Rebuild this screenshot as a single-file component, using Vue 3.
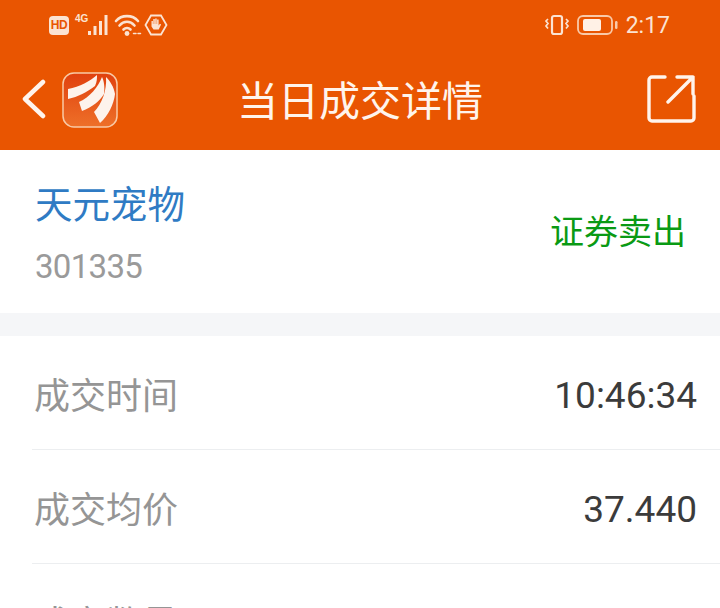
<template>
  <div class="page">
    <header class="top">
      <div class="status-bar">
        <div class="status-left">
          <span class="hd">HD</span>
          <span class="net">4G</span>
          <svg class="signal" width="24" height="22" viewBox="0 0 24 22">
            <rect x="2" y="17" width="3" height="4" />
            <rect x="7.500" y="12" width="3" height="9" />
            <rect x="13" y="7" width="3" height="14" />
            <rect x="18.500" y="1" width="3" height="20" />
          </svg>
          <svg class="wifi" width="28" height="24" viewBox="0 0 28 24" fill="none" stroke="#fbe3d2" stroke-width="2.600" stroke-linecap="round">
            <path d="M2 8C7.500 1.500 18.500 1.500 24 8" />
            <path d="M5.500 12.500C10 7.500 16 7.500 20.500 12.500" />
            <path d="M9.500 16.500C11.500 14.500 14.500 14.500 16.500 16.500" />
            <circle cx="13" cy="20.500" r="2.400" fill="#fbe3d2" stroke="none" />
            <path d="M19.500 20.500h2.500M24 20.500h2.500" stroke-width="1.500" />
          </svg>
          <svg class="hand" width="24" height="24" viewBox="0 0 24 24">
            <path d="M7 2.500h10l5.500 9.500-5.500 9.500H7L1.500 12z" fill="none" stroke="#fbe3d2" stroke-width="1.800" />
            <path d="M7.500 11V8h1.400v3h.4V6h1.500v5h.4V5.500h1.500V11h.4V6.500h1.500v6l1.300-1.800 1.200.7-2.400 5.100H9.500l-2-3z" fill="#fbe3d2" />
          </svg>
        </div>
        <div class="status-right">
          <svg class="vibrate" width="26" height="22" viewBox="0 0 26 22" fill="none" stroke="#fbe3d2">
            <rect x="8" y="2" width="10" height="18" rx="2" stroke-width="2.200" />
            <path d="M4 5L2 7l2 2.500L2 12l2 2.500M22 5l2 2-2 2.500 2 2.500-2 2.500" stroke-width="1.700" />
          </svg>
          <svg class="battery" width="42" height="22" viewBox="0 0 42 22">
            <rect x="1" y="2" width="34" height="18" rx="5" fill="none" stroke="#f9c9a8" stroke-width="1.800" />
            <rect x="6" y="5" width="18" height="12" rx="2" fill="#fff1e6" />
            <rect x="38" y="7" width="2.500" height="8" rx="1.200" fill="#f9c9a8" />
          </svg>
          <span class="clock">2:17</span>
        </div>
      </div>
      <div class="nav-bar">
        <div class="nav-left">
          <svg class="back" width="26" height="44" viewBox="0 0 26 44" fill="none" stroke="#fff4ec" stroke-width="4.500" stroke-linecap="round" stroke-linejoin="round">
            <path d="M21 4L3 21l18 17" />
          </svg>
          <svg class="logo" width="56" height="56" viewBox="0 0 56 56">
            <defs>
              <linearGradient id="logoBg" x1="0" y1="0" x2="0" y2="1">
                <stop offset="0" stop-color="#e0400e" />
                <stop offset="1" stop-color="#ee7029" />
              </linearGradient>
            </defs>
            <rect x="1" y="1" width="54" height="54" rx="11" fill="url(#logoBg)" stroke="#f9c9a5" stroke-width="1.500" />
            <path d="M35 3C28 9 18 15 6 17L6 27C16 25 25 20 33 14C35 10 35 6 35 3z" fill="#fdf3ec" />
            <path d="M40 5C36 15 28 25 17 30L20 39C30 35 38 29 42 22C43 15 42 9 40 5z" fill="#fdf3ec" />
            <path d="M44 5C45 18 40 32 32 40L38 51C46 44 52 32 53 22C52 15 48 9 44 5z" fill="#fdf3ec" />
          </svg>
        </div>
        <h1 class="title">当日成交详情</h1>
        <svg class="share" width="50" height="50" viewBox="0 0 50 50" fill="none" stroke="#fff4ec" stroke-width="3.400" stroke-linecap="round" stroke-linejoin="round">
          <path d="M18 2H5a3 3 0 0 0-3 3v38a3 3 0 0 0 3 3h39a3 3 0 0 0 3-3V21" />
          <path d="M21 27L46 2M30 2h16v17" />
        </svg>
      </div>
    </header>

    <section class="stock">
      <div>
        <div class="stock-name">天元宠物</div>
        <div class="stock-code">301335</div>
      </div>
      <div class="trade-type">证券卖出</div>
    </section>

    <div class="gap"></div>

    <section class="rows">
      <div v-for="row in rows" :key="row.label" class="row">
        <span class="label">{{ row.label }}</span>
        <span class="value">{{ row.value }}</span>
      </div>
    </section>
  </div>
</template>

<script setup>
const rows = [
  { label: "成交时间", value: "10:46:34" },
  { label: "成交均价", value: "37.440" },
  { label: "成交数量", value: "" },
];
</script>

<style>
html, body { margin: 0; background: #fff; overflow: hidden; }
</style>

<style scoped>
.page {
  width: 720px; height: 608px; overflow: hidden; background: #fff;
  font-family: "Noto Sans CJK SC", "Noto Sans", sans-serif;
}
.top { background: #e95501; height: 150px; }
.status-bar { height: 50px; display: flex; justify-content: space-between; align-items: center; padding: 0 50px 0 49px; }
.status-left, .status-right { display: flex; align-items: center; }
.hd {
  width: 20px; height: 19px; border-radius: 4px; background: #fbe3d2; color: #e95501;
  font: 700 12px/19px "Liberation Sans", sans-serif; letter-spacing: -0.5px; text-align: center;
}
.net { font: 700 10px/1 "Liberation Sans", sans-serif; color: #fbe3d2; margin: -12px 0 0 6px; }
.signal { fill: #fbe3d2; margin-left: -2px; }
.wifi { margin-left: 4px; }
.hand { margin-left: 2px; }
.vibrate { margin-right: 7px; }
.clock { font: 400 23px/1 Roboto, sans-serif; color: #fbe3d2; margin-left: 7px; }
.nav-bar { height: 100px; display: flex; align-items: center; justify-content: space-between; padding: 0 23px 0 22px; position: relative; }
.nav-left { display: flex; align-items: center; gap: 14px; }
.title {
  margin: 0 0 3px; position: absolute; left: 0; right: 0; text-align: center; pointer-events: none;
  font-size: 41px; font-weight: 400; color: #fff4ec; line-height: 1;
}
.stock { height: 163px; padding: 0 35px; display: flex; justify-content: space-between; align-items: center; box-sizing: border-box; }
.stock-name { font-size: 37.500px; line-height: 1; color: #2f7bc4; margin-top: 3px; }
.stock-code { font: 400 33px/1 Roboto, sans-serif; letter-spacing: -0.7px; color: #9a9a9a; margin-top: 30px; }
.trade-type { font-size: 34px; line-height: 1; color: #0a9a14; margin: 0 -1px 3px 0; }
.gap { height: 23px; background: #f5f6f8; }
.row { height: 114px; box-sizing: border-box; display: flex; justify-content: space-between; align-items: center; padding: 0 23px 0 34px; position: relative; }
.row::after { content: ""; position: absolute; left: 32px; right: 0; bottom: 0; height: 1px; background: #eceef0; }
.label { font-size: 36px; line-height: 1; color: #959595; }
.value { font: 400 37px/1 Roboto, sans-serif; color: #3b3b3b; margin-top: 4px; }
</style>
